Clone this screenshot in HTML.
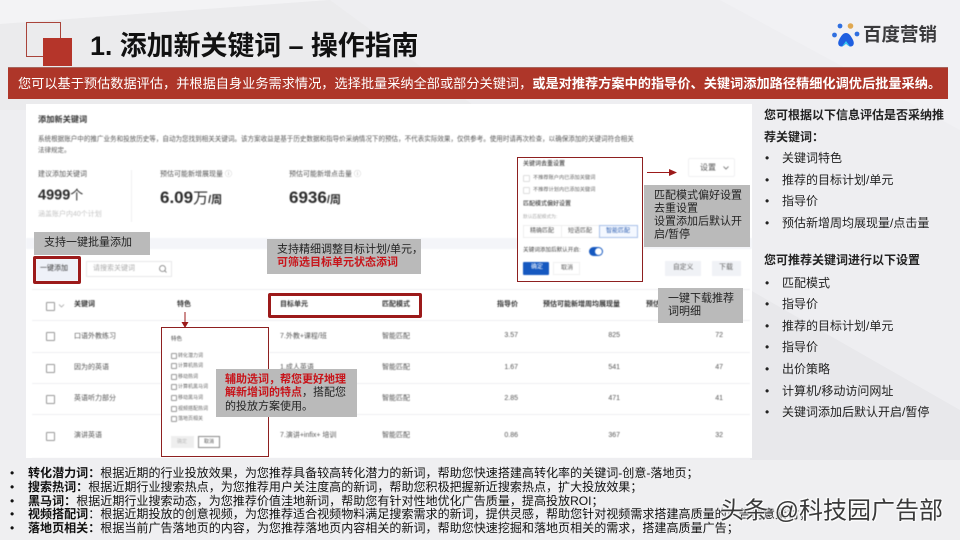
<!DOCTYPE html>
<html lang="zh">
<head>
<meta charset="utf-8">
<title>添加新关键词 – 操作指南</title>
<style>
*{box-sizing:border-box;margin:0;padding:0}
html,body{width:960px;height:540px;overflow:hidden;background:#eeeef0}
body{position:relative;font-family:"Liberation Sans","Noto Sans CJK SC",sans-serif;color:#222}
.l{position:absolute;left:0;top:0;width:960px;height:540px}
.t{position:absolute;white-space:nowrap;transform:translateY(-50%);line-height:1.2}
.b{position:absolute}
.c{position:absolute;border:1px solid #bbb;background:#fff;border-radius:1px}
.d{font-size:7px;color:#555}
.h{font-size:7px;color:#333;font-weight:700}
.o{font-size:5.200px;color:#666}
.f{font-size:5px;color:#666}
.g{position:absolute;background:#bababa}
.n{font-size:11px;color:#222}
.r{color:#c8141a;font-weight:700}
.s{font-size:12px;color:#222}
.m{font-size:12.050px;color:#111}
.m b{font-weight:700}
.hr{position:absolute;left:32px;width:718px;height:1px;background:#eeeff2}
</style>
</head>
<body>
<svg class="l" viewBox="0 0 960 540">
<rect width="960" height="540" fill="#eeeef1"/>
<polygon points="0,0 330,0 0,24" fill="#f3f3f5"/>
<polygon points="0,24 330,0 480,110 0,110" fill="#ebebed"/>
<polygon points="720,0 960,0 960,130" fill="#f1f1f4"/>
<polygon points="750,290 960,410 960,540 750,540" fill="#e8e8eb"/>
<polygon points="0,460 960,460 960,540 0,540" fill="#efeff1"/>
<rect x="26.5" y="22.5" width="34" height="34" fill="none" stroke="#a9433a" stroke-width="1"/>
<rect x="43" y="38" width="29" height="28" fill="#b5352a"/>
<circle cx="840" cy="26" r="2.4" fill="#2f6fe0"/>
<circle cx="850.5" cy="26" r="2.8" fill="#e0a850"/>
<circle cx="834.5" cy="35" r="2.4" fill="#2f6fe0"/>
<circle cx="857" cy="34" r="2.4" fill="#2f6fe0"/>
<path d="M846 33 C849 33 851 36 853 40 C855 44 853 47 850 46.500 C848 46 847 44 846 44 C845 44 844 46 842 46.500 C839 47 837 44 839 40 C841 36 843 33 846 33Z" fill="#1f5fe0"/>
<path d="M846 41 L850 46.500 C848 46 847 44 846 44 C845 44 844 46 842 46.500Z" fill="#35c5ee"/>
</svg>

<div class="t" style="left:90px;top:46px;font-size:27px;font-weight:700;color:#111;letter-spacing:-.1px">1. 添加新关键词 – 操作指南</div>
<div class="t" style="left:863px;top:35px;font-size:18.500px;font-weight:700;color:#3a3a3c">百度营销</div>

<div class="b" style="left:8px;top:67px;width:940px;height:32px;background:#ae3629;border-top:1px solid #a5665e"></div>
<div class="t" style="left:18px;top:84px;font-size:13.200px;color:#fff">您可以基于预估数据评估，并根据自身业务需求情况，选择批量采纳全部或部分关键词，<b>或是对推荐方案中的指导价、关键词添加路径精细化调优后批量采纳。</b></div>

<div class="b" style="left:26px;top:104px;width:726px;height:354px;background:#fff"></div>

<div class="l" style="filter:blur(.45px)">
<div class="t h" style="left:38px;top:120px;font-size:8.200px">添加新关键词</div>
<div class="t d" style="left:38px;top:140px;font-size:6.550px">系统根据账户中的推广业务和投放历史等，自动为您找到相关关键词。该方案收益是基于历史数据和指导价采纳情况下的预估，不代表实际效果，仅供参考。使用时请再次检查，以确保添加的关键词符合相关</div>
<div class="t d" style="left:38px;top:151px;font-size:6.500px">法律规定。</div>

<div class="t d" style="left:38px;top:175px">建议添加关键词</div>
<div class="t" style="left:38px;top:196px;font-size:14.500px;font-weight:700;color:#2a2a2a">4999<span style="font-weight:400;font-size:13px">个</span></div>
<div class="t" style="left:38px;top:215px;font-size:7px;color:#c4c4c4">涵盖账户内40个计划</div>
<div class="b" style="left:131px;top:170px;width:1px;height:52px;background:#f0f0f2"></div>

<div class="t d" style="left:160px;top:175px">预估可能新增展现量 <span style="color:#aaa">ⓘ</span></div>
<div class="t" style="left:160px;top:198px;font-size:17px;font-weight:700;color:#2a2a2a">6.09<span style="font-weight:400;font-size:15px">万</span><span style="font-size:11px">/周</span></div>
<div class="t d" style="left:289px;top:175px">预估可能新增点击量 <span style="color:#aaa">ⓘ</span></div>
<div class="t" style="left:289px;top:198px;font-size:17px;font-weight:700;color:#2a2a2a">6936<span style="font-size:11px">/周</span></div>

<div class="b" style="left:26px;top:238px;width:726px;height:11px;background:#f4f5f9"></div>

<div class="b" style="left:36px;top:259px;width:42px;height:22px;background:#eef1f8"></div>
<div class="t" style="left:40px;top:269px;font-size:7px;color:#333">一键添加</div>
<div class="b" style="left:86px;top:261px;width:86px;height:16px;border:1px solid #e8e8ea"></div>
<div class="t" style="left:93px;top:269px;font-size:7px;color:#aaa">请搜索关键词</div>
<svg class="b" style="left:158px;top:264px" width="10" height="10" viewBox="0 0 10 10"><circle cx="4.500" cy="4.500" r="3" fill="none" stroke="#777" stroke-width=".8"/><path d="M6.800 6.800L8.500 8.500" stroke="#777" stroke-width=".8"/></svg>

<div class="b" style="left:665px;top:261px;width:36px;height:15px;background:#f0f2f6"></div>
<div class="t" style="left:673px;top:268px;font-size:6.800px;color:#666">自定义</div>
<div class="b" style="left:712px;top:261px;width:29px;height:15px;background:#f0f2f6"></div>
<div class="t" style="left:719px;top:268px;font-size:7px;color:#666">下载</div>

<div class="b" style="left:688px;top:158px;width:47px;height:19px;border:1px solid #f0f0f2;border-radius:2px"></div>
<div class="t" style="left:700px;top:168px;font-size:8px;color:#555">设置</div>
<svg class="b" style="left:722px;top:165px" width="8" height="6" viewBox="0 0 8 6"><path d="M1.500 1.500L4 4L6.500 1.500" fill="none" stroke="#666" stroke-width=".8"/></svg>

<div class="b" style="left:32px;top:289px;width:718px;height:1px;background:#eeeff2"></div>
<div class="hr" style="top:320px"></div>
<div class="hr" style="top:352px"></div>
<div class="hr" style="top:383px"></div>
<div class="hr" style="top:414px"></div>
<div class="hr" style="top:458px"></div>

<div class="c" style="left:46px;top:302px;width:9px;height:9px;border-color:#999"></div>
<svg class="b" style="left:58px;top:303px" width="7" height="6" viewBox="0 0 7 6"><path d="M1 1.500L3.500 4L6 1.500" fill="none" stroke="#999" stroke-width=".7"/></svg>
<div class="t h" style="left:74px;top:305px">关键词</div>
<div class="t h" style="left:177px;top:305px">特色</div>
<div class="t h" style="left:280px;top:305px">目标单元</div>
<div class="t h" style="left:382px;top:305px">匹配模式</div>
<div class="t h" style="right:442px;top:305px">指导价</div>
<div class="t h" style="right:340px;top:305px">预估可能新增周均展现量</div>
<div class="t h" style="left:646px;top:305px">预估</div>

<div class="c" style="left:46px;top:332px;width:9px;height:9px;border-color:#999"></div>
<div class="c" style="left:46px;top:364px;width:9px;height:9px;border-color:#999"></div>
<div class="c" style="left:46px;top:395px;width:9px;height:9px;border-color:#999"></div>
<div class="c" style="left:46px;top:432px;width:9px;height:9px;border-color:#999"></div>

<div class="t d" style="left:74px;top:337px">口语外教练习</div>
<div class="t d" style="left:74px;top:368px">因为的英语</div>
<div class="t d" style="left:74px;top:399px">英语听力部分</div>
<div class="t d" style="left:74px;top:436px">演讲英语</div>

<div class="t d" style="left:280px;top:337px">7.外教+课程/班</div>
<div class="t d" style="left:280px;top:368px">1.成人英语</div>
<div class="t d" style="left:280px;top:436px">7.演讲+infix+ 培训</div>

<div class="t d" style="left:382px;top:337px">智能匹配</div>
<div class="t d" style="left:382px;top:368px">智能匹配</div>
<div class="t d" style="left:382px;top:399px">智能匹配</div>
<div class="t d" style="left:382px;top:436px">智能匹配</div>

<div class="t d" style="right:442px;top:336px">3.57</div>
<div class="t d" style="right:442px;top:368px">1.67</div>
<div class="t d" style="right:442px;top:399px">2.85</div>
<div class="t d" style="right:442px;top:436px">0.86</div>
<div class="t d" style="right:340px;top:336px">825</div>
<div class="t d" style="right:340px;top:368px">541</div>
<div class="t d" style="right:340px;top:399px">471</div>
<div class="t d" style="right:340px;top:436px">367</div>
<div class="t d" style="right:237px;top:336px">72</div>
<div class="t d" style="right:237px;top:368px">47</div>
<div class="t d" style="right:237px;top:399px">41</div>
<div class="t d" style="right:237px;top:436px">32</div>

<!-- settings popover -->
<div class="b" style="left:517px;top:157px;width:126px;height:125px;background:#fff"></div>
<div class="t" style="left:523px;top:165px;font-size:6px;color:#444;font-weight:500">关键词去重设置</div>
<div class="c" style="left:523px;top:175px;width:7px;height:7px;border-color:#ddd"></div>
<div class="t o" style="left:533px;top:178px">不推荐账户内已添加关键词</div>
<div class="c" style="left:523px;top:187px;width:7px;height:7px;border-color:#ddd"></div>
<div class="t o" style="left:533px;top:190px">不推荐计划内已添加关键词</div>
<div class="t" style="left:523px;top:205px;font-size:6px;color:#444;font-weight:500">匹配模式偏好设置</div>
<div class="t" style="left:523px;top:217px;font-size:4.700px;color:#aaa">默认匹配模式为:</div>
<div class="b" style="left:523px;top:225px;width:77px;height:13px;border:1px solid #eee"></div>
<div class="b" style="left:561px;top:225px;width:1px;height:13px;background:#eee"></div>
<div class="b" style="left:599px;top:225px;width:39px;height:13px;border:1px solid #a8c0e8;background:#f4f8ff"></div>
<div class="t" style="left:530px;top:232px;font-size:6px;color:#555">精确匹配</div>
<div class="t" style="left:568px;top:232px;font-size:6px;color:#555">短语匹配</div>
<div class="t" style="left:606px;top:232px;font-size:6px;color:#2a5cb0">智能匹配</div>
<div class="t" style="left:523px;top:251px;font-size:5.600px;color:#444">关键词添加后默认开启:</div>
<div class="b" style="left:589px;top:247px;width:14px;height:9px;border-radius:5px;background:#1558c0"></div>
<div class="b" style="left:595px;top:248px;width:7px;height:7px;border-radius:50%;background:#fff"></div>
<div class="b" style="left:523px;top:262px;width:26px;height:13px;background:#1558c0;border-radius:1px"></div>
<div class="t" style="left:531px;top:268px;font-size:6px;color:#fff">确定</div>
<div class="b" style="left:553px;top:262px;width:27px;height:13px;border:1px solid #f0f0f0"></div>
<div class="t" style="left:561px;top:269px;font-size:6px;color:#555">取消</div>

<!-- feature popover -->
<div class="b" style="left:161px;top:327px;width:108px;height:130px;background:#fff"></div>
<div class="t" style="left:171px;top:340px;font-size:5.500px;color:#444">特色</div>
<div class="c" style="left:171px;top:353px;width:6px;height:6px;border-color:#999"></div><div class="t f" style="left:178px;top:356px">转化潜力词</div>
<div class="c" style="left:171px;top:363px;width:6px;height:6px;border-color:#999"></div><div class="t f" style="left:178px;top:366px">计算机热词</div>
<div class="c" style="left:171px;top:374px;width:6px;height:6px;border-color:#999"></div><div class="t f" style="left:178px;top:377px">移动热词</div>
<div class="c" style="left:171px;top:384px;width:6px;height:6px;border-color:#999"></div><div class="t f" style="left:178px;top:387px">计算机黑马词</div>
<div class="c" style="left:171px;top:395px;width:6px;height:6px;border-color:#999"></div><div class="t f" style="left:178px;top:398px">移动黑马词</div>
<div class="c" style="left:171px;top:406px;width:6px;height:6px;border-color:#999"></div><div class="t f" style="left:178px;top:409px">视频搭配热词</div>
<div class="c" style="left:171px;top:416px;width:6px;height:6px;border-color:#999"></div><div class="t f" style="left:178px;top:419px">落地页相关</div>
<div class="b" style="left:171px;top:436px;width:23px;height:12px;background:#eee"></div>
<div class="t" style="left:177px;top:442px;font-size:5px;color:#bbb">确定</div>
<div class="b" style="left:198px;top:436px;width:22px;height:12px;border:1px solid #888"></div>
<div class="t" style="left:204px;top:442px;font-size:5px;color:#555">取消</div>
</div>

<!-- popover borders -->
<div class="b" style="left:517px;top:157px;width:126px;height:125px;border:1px solid #8e2020"></div>
<div class="b" style="left:161px;top:327px;width:108px;height:130px;border:1px solid #8e2020"></div>

<!-- red highlights -->
<div class="b" style="left:33px;top:256px;width:48px;height:28px;border:3px solid #9c1a1a;border-radius:2px"></div>
<div class="b" style="left:268px;top:293px;width:154px;height:25px;border:3px solid #9c1a1a;border-radius:2px"></div>
<svg class="l" viewBox="0 0 960 540">
<path d="M185 312V323" stroke="#9c1a1a" stroke-width="1"/>
<path d="M181.500 322H188.500L185 328Z" fill="#9c1a1a"/>
<path d="M647 172.500H671" stroke="#9c1a1a" stroke-width="1"/>
<path d="M669 169L677 172.500L669 176Z" fill="#9c1a1a"/>
</svg>

<!-- grey callouts -->
<div class="g" style="left:34px;top:232px;width:116px;height:23px"></div>
<div class="t n" style="left:44px;top:243px">支持一键批量添加</div>
<div class="g" style="left:267px;top:239px;width:154px;height:35px"></div>
<div class="t n" style="left:277px;top:250px">支持精细调整目标计划/单元，</div>
<div class="t n r" style="left:277px;top:263px">可筛选目标单元状态添词</div>
<div class="g" style="left:644px;top:185px;width:106px;height:62px"></div>
<div class="t n" style="left:654px;top:196px">匹配模式偏好设置</div>
<div class="t n" style="left:654px;top:209px">去重设置</div>
<div class="t n" style="left:654px;top:222px">设置添加后默认开</div>
<div class="t n" style="left:654px;top:235px">启/暂停</div>
<div class="g" style="left:658px;top:288px;width:85px;height:35px"></div>
<div class="t n" style="left:668px;top:299px">一键下载推荐</div>
<div class="t n" style="left:668px;top:312px">词明细</div>
<div class="g" style="left:216px;top:369px;width:141px;height:48px"></div>
<div class="t n r" style="left:225px;top:380px">辅助选词，帮您更好地理</div>
<div class="t n" style="left:225px;top:393px"><span class="r">解新增词的特点</span>，搭配您</div>
<div class="t n" style="left:225px;top:407px">的投放方案使用。</div>

<!-- right column -->
<div class="t s" style="left:764px;top:115px;font-weight:700">您可根据以下信息评估是否采纳推</div>
<div class="t s" style="left:764px;top:137px;font-weight:700">荐关键词：</div>
<div class="t s" style="left:765px;top:158px">•</div><div class="t s" style="left:782px;top:158px">关键词特色</div>
<div class="t s" style="left:765px;top:180px">•</div><div class="t s" style="left:782px;top:180px">推荐的目标计划/单元</div>
<div class="t s" style="left:765px;top:201px">•</div><div class="t s" style="left:782px;top:201px">指导价</div>
<div class="t s" style="left:765px;top:223px">•</div><div class="t s" style="left:782px;top:223px">预估新增周均展现量/点击量</div>
<div class="t s" style="left:764px;top:260px;font-weight:700">您可推荐关键词进行以下设置</div>
<div class="t s" style="left:765px;top:283px">•</div><div class="t s" style="left:782px;top:283px">匹配模式</div>
<div class="t s" style="left:765px;top:304px">•</div><div class="t s" style="left:782px;top:304px">指导价</div>
<div class="t s" style="left:765px;top:326px">•</div><div class="t s" style="left:782px;top:326px">推荐的目标计划/单元</div>
<div class="t s" style="left:765px;top:347px">•</div><div class="t s" style="left:782px;top:347px">指导价</div>
<div class="t s" style="left:765px;top:369px">•</div><div class="t s" style="left:782px;top:369px">出价策略</div>
<div class="t s" style="left:765px;top:391px">•</div><div class="t s" style="left:782px;top:391px">计算机/移动访问网址</div>
<div class="t s" style="left:765px;top:412px">•</div><div class="t s" style="left:782px;top:412px">关键词添加后默认开启/暂停</div>

<!-- bottom notes -->
<div class="t m" style="left:10px;top:473px">•</div><div class="t m" style="left:28px;top:473px"><b>转化潜力词：</b>根据近期的行业投放效果，为您推荐具备较高转化潜力的新词，帮助您快速搭建高转化率的关键词-创意-落地页；</div>
<div class="t m" style="left:10px;top:487px">•</div><div class="t m" style="left:28px;top:487px"><b>搜索热词：</b>根据近期行业搜索热点，为您推荐用户关注度高的新词，帮助您积极把握新近搜索热点，扩大投放效果；</div>
<div class="t m" style="left:10px;top:501px">•</div><div class="t m" style="left:28px;top:501px"><b>黑马词：</b>根据近期行业搜索动态，为您推荐价值洼地新词，帮助您有针对性地优化广告质量，提高投放ROI；</div>
<div class="t m" style="left:10px;top:514px">•</div><div class="t m" style="left:28px;top:514px"><b>视频搭配词</b>：根据近期投放的创意视频，为您推荐适合视频物料满足搜索需求的新词，提供灵感，帮助您针对视频需求搭建高质量的广告创意素材；</div>
<div class="t m" style="left:10px;top:528px">•</div><div class="t m" style="left:28px;top:528px"><b>落地页相关：</b>根据当前广告落地页的内容，为您推荐落地页内容相关的新词，帮助您快速挖掘和落地页相关的需求，搭建高质量广告；</div>

<div class="t" style="left:720px;top:512px;font-size:24px;color:#3a3a3a;text-shadow:0 0 2px #fff,0 0 2px #fff,1px 1px 1px #fff,-1px -1px 1px #fff">头条 @科技园广告部</div>
</body>
</html>
